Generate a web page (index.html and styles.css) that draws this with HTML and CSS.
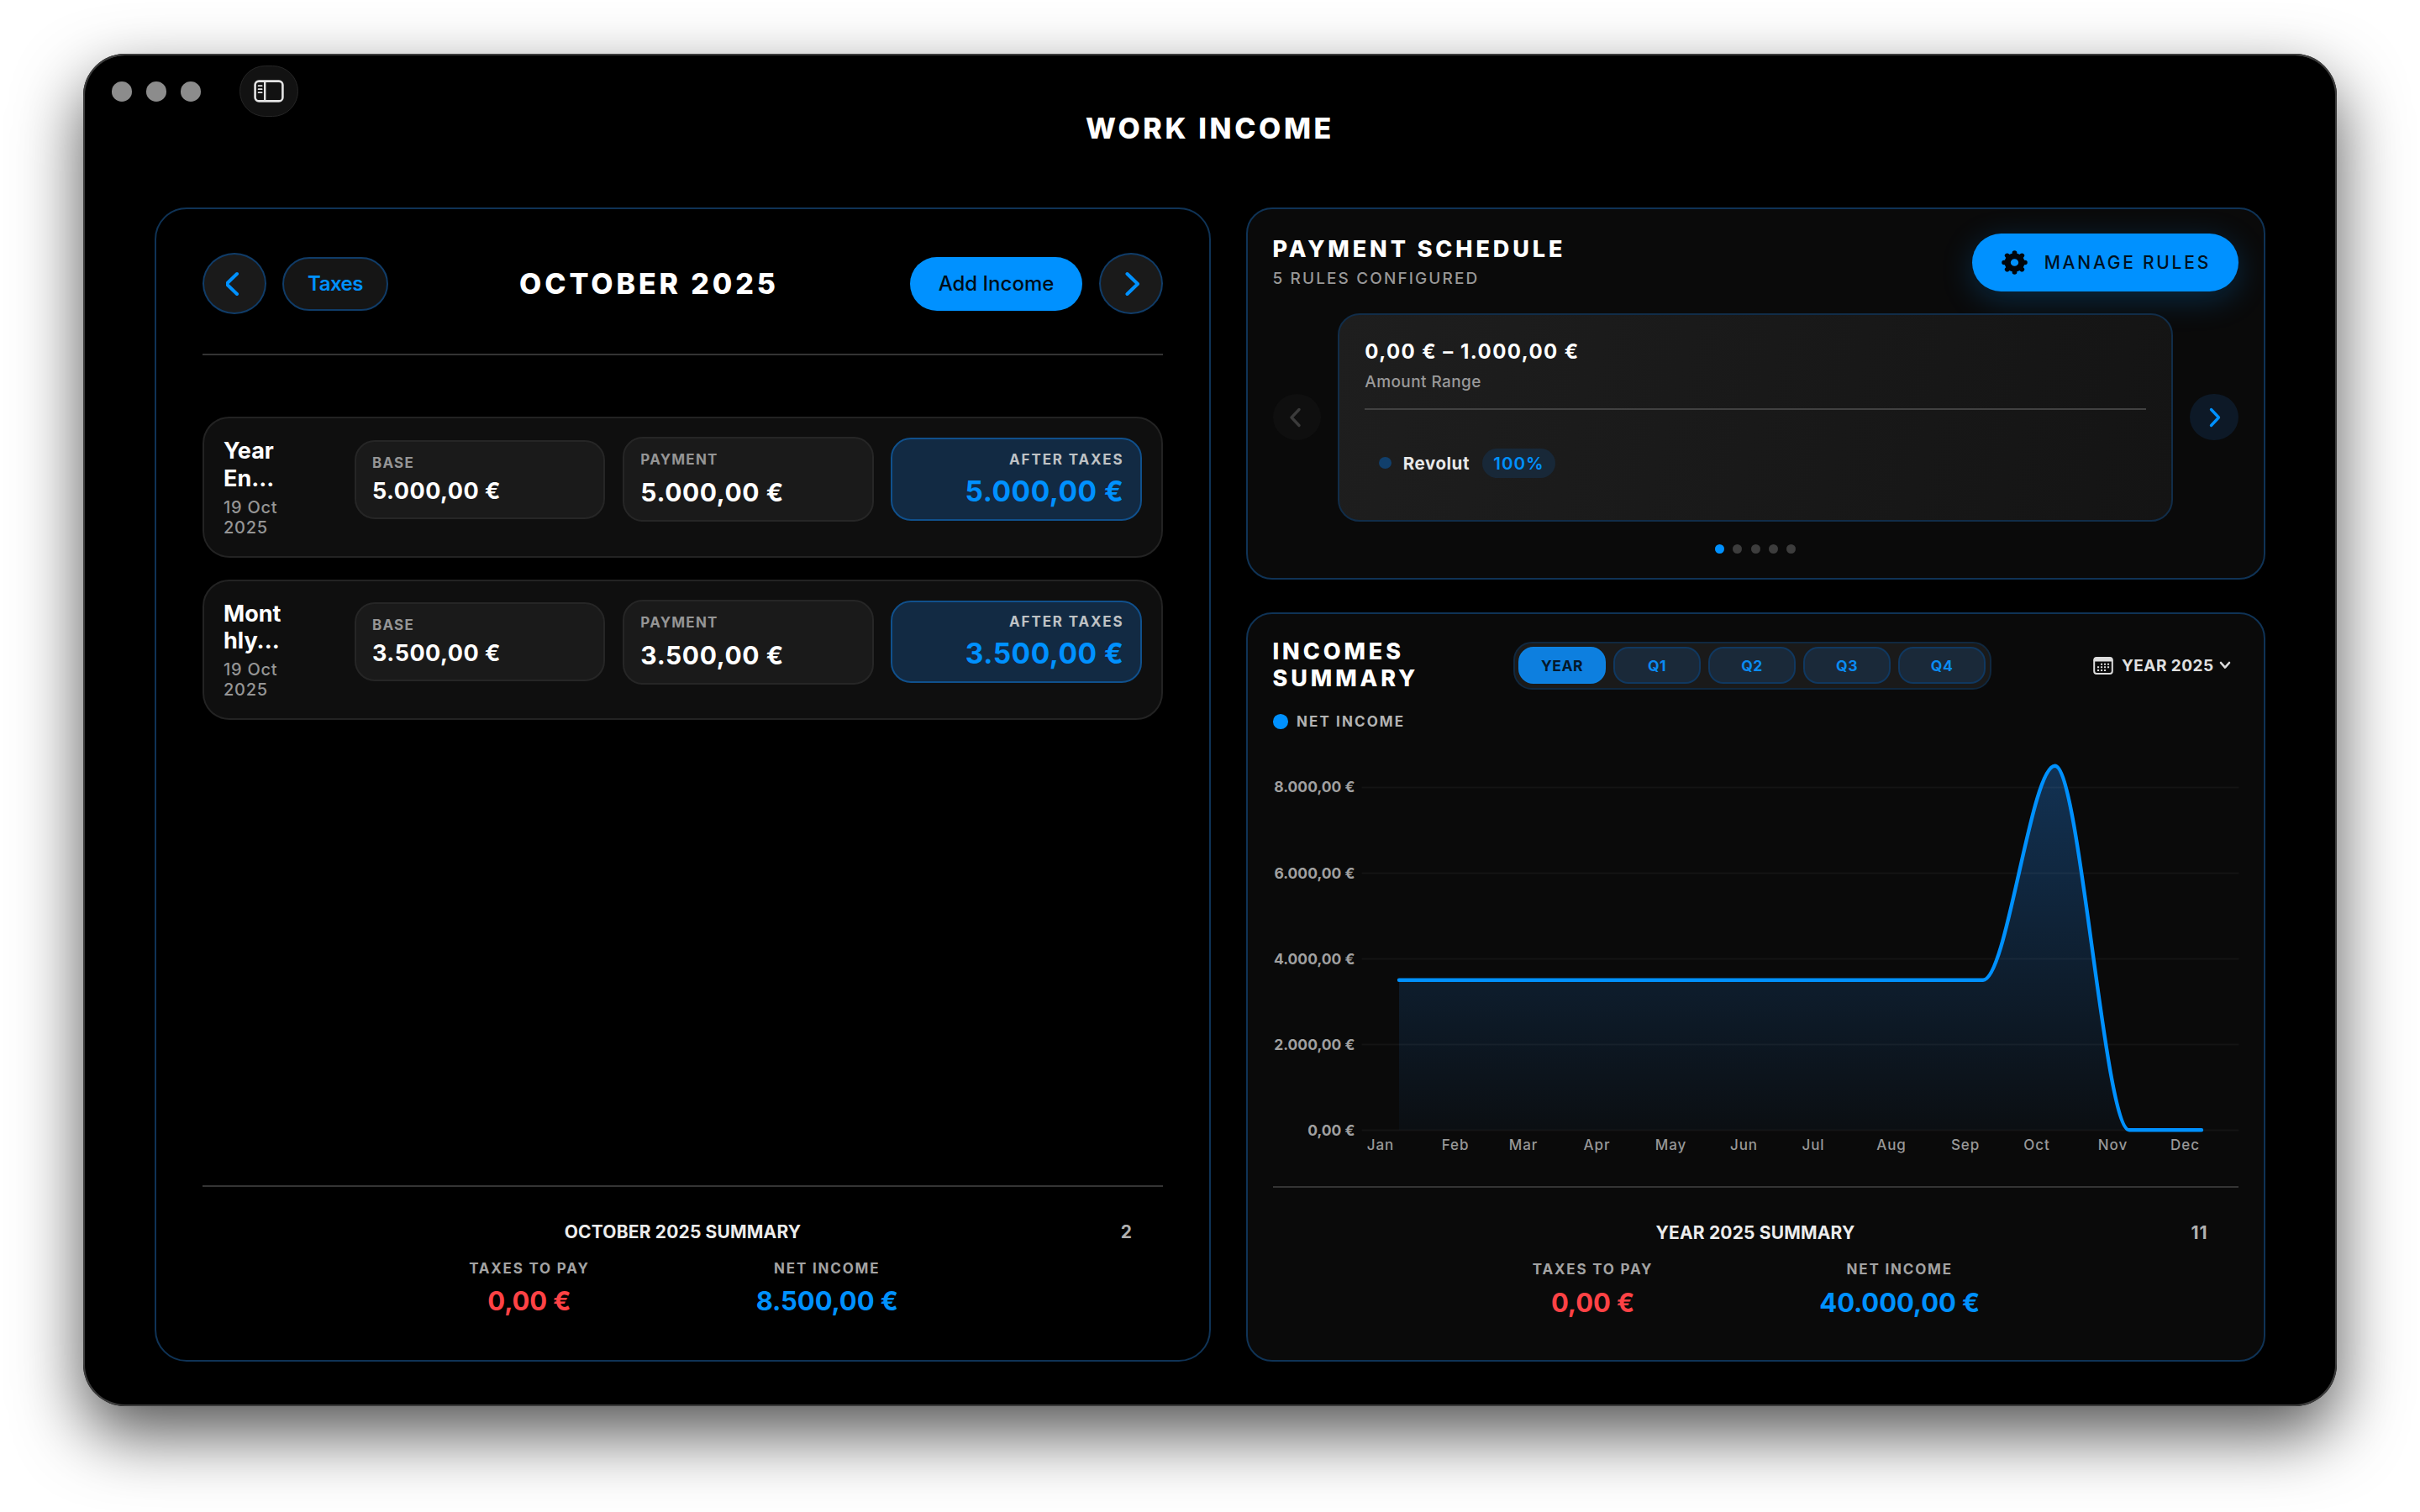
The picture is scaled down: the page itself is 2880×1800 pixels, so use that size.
FILE: index.html
```html
<!DOCTYPE html>
<html lang="en">
<head>
<meta charset="utf-8">
<title>Work Income</title>
<link rel="stylesheet" href="styles.css">
</head>
<body>
<div class="window">
  <header class="titlebar">
    <div class="toolbar">
      <span class="light"></span><span class="light"></span><span class="light"></span>
      <button class="sidebar-toggle" aria-label="Toggle sidebar">
        <svg width="36" height="27" viewBox="0 0 36 27" fill="none" stroke="#e4e4e4">
          <rect x="1.6" y="1.6" width="32.8" height="23.8" rx="4.5" stroke-width="2.6"/>
          <path d="M13.2 2v23" stroke-width="2.4"/>
          <path d="M5.6 7.2h4M5.6 11.2h4M5.6 15.2h4" stroke-width="1.8" stroke-linecap="round"/>
        </svg>
      </button>
    </div>
    <h1 class="app-title">WORK INCOME</h1>
  </header>

  <main class="columns">
    <section class="panel month">
      <div class="month-head">
        <button class="round"><svg width="20" height="30" viewBox="0 0 20 30"><path class="chev" d="M14 3 1.500 15 14 27"/></svg></button>
        <button class="pill ghost">Taxes</button>
        <h2 class="month-title">OCTOBER 2025</h2>
        <button class="pill solid">Add Income</button>
        <button class="round"><svg width="20" height="30" viewBox="0 0 20 30"><path class="chev" d="M5.500 3 18 15 5.500 27"/></svg></button>
      </div>

      <div class="list">
        <article class="row">
          <div class="who">
            <div class="name">Year<br>En...</div>
            <div class="date">19 Oct<br>2025</div>
          </div>
          <div class="fields">
            <div class="field base"><span class="label">BASE</span><span class="value">5.000,00 €</span></div>
            <div class="field payment"><span class="label">PAYMENT</span><span class="value">5.000,00 €</span></div>
            <div class="field after"><span class="label">AFTER TAXES</span><span class="value">5.000,00 €</span></div>
          </div>
        </article>
        <article class="row">
          <div class="who">
            <div class="name">Mont<br>hly...</div>
            <div class="date">19 Oct<br>2025</div>
          </div>
          <div class="fields">
            <div class="field base"><span class="label">BASE</span><span class="value">3.500,00 €</span></div>
            <div class="field payment"><span class="label">PAYMENT</span><span class="value">3.500,00 €</span></div>
            <div class="field after"><span class="label">AFTER TAXES</span><span class="value">3.500,00 €</span></div>
          </div>
        </article>
      </div>

      <footer class="summary">
        <div class="summary-head"><h3>OCTOBER 2025 SUMMARY</h3><span class="count">2</span></div>
        <div class="stats">
          <div class="stat"><span class="stat-label">TAXES TO PAY</span><span class="stat-value red">0,00 €</span></div>
          <div class="stat"><span class="stat-label">NET INCOME</span><span class="stat-value">8.500,00 €</span></div>
        </div>
      </footer>
    </section>

    <div class="side">
      <section class="panel card schedule">
        <div class="schedule-head">
          <div>
            <h2 class="card-title">PAYMENT SCHEDULE</h2>
            <p class="card-sub">5 RULES CONFIGURED</p>
          </div>
          <button class="manage">
            <svg width="31" height="29" viewBox="-15 -15 30 30" preserveAspectRatio="none" fill="none" stroke="#00060c">
              <circle r="8" stroke-width="7"/>
              <path stroke-width="5.6" stroke-linecap="round" d="M0-10V-12M0 10V12M-10 0H-12M10 0H12M7.1-7.1 8.5-8.5M-7.1-7.1-8.5-8.5M7.1 7.1 8.5 8.5M-7.1 7.1-8.5 8.5"/>
            </svg>
            <span>MANAGE RULES</span>
          </button>
        </div>
        <div class="carousel">
          <button class="arrow off"><svg width="16" height="24" viewBox="0 0 16 24"><path class="chev" d="M11 2.500 2 12 11 21.500"/></svg></button>
          <div class="rule">
            <div class="rule-range">0,00 € – 1.000,00 €</div>
            <div class="rule-sub">Amount Range</div>
            <div class="rule-item"><i class="rule-dot"></i><b>Revolut</b><span class="percent">100%</span></div>
          </div>
          <button class="arrow"><svg width="16" height="24" viewBox="0 0 16 24"><path class="chev" d="M4.500 2.500 13.500 12 4.500 21.500"/></svg></button>
        </div>
        <div class="pager"><i class="on"></i><i></i><i></i><i></i><i></i></div>
      </section>

      <section class="panel card incomes">
        <div class="incomes-head">
          <h2 class="card-title two-line">INCOMES<br>SUMMARY</h2>
          <div class="segments">
            <button class="seg active">YEAR</button><button class="seg">Q1</button><button class="seg">Q2</button><button class="seg">Q3</button><button class="seg">Q4</button>
          </div>
          <button class="year-menu">
            <svg width="24" height="21" viewBox="0 0 24 21">
              <rect x="1.200" y="1" width="21.600" height="19" rx="3" fill="none" stroke="#dcdcdc" stroke-width="2"/>
              <path d="M1.200 5V3.500Q1.200 1 3.500 1H20.500Q22.800 1 22.800 3.500V5Z" fill="#dcdcdc" stroke="#dcdcdc"/>
              <path fill="#dcdcdc" d="M9 7.700h2.100v2H9zM13 7.700h2.100v2H13zM17 7.700h2.100v2H17zM5 11.300h2.100v2H5zM9 11.300h2.100v2H9zM13 11.300h2.100v2H13zM17 11.300h2.100v2H17zM5 14.900h2.100v2H5zM9 14.900h2.100v2H9zM13 14.900h2.100v2H13z"/>
            </svg>
            <span>YEAR 2025</span>
            <svg width="14" height="10" viewBox="0 0 14 10"><path d="M2 2l5 5.600L12 2" fill="none" stroke="#dcdcdc" stroke-width="2.600" stroke-linecap="round" stroke-linejoin="round"/></svg>
          </button>
        </div>
        <div class="legend"><i></i><span>NET INCOME</span></div>
        <svg class="chart" width="1150" height="510" viewBox="0 0 1150 510">
          <defs>
            <linearGradient id="area" x1="0" y1="0" x2="0" y2="1">
              <stop offset="0" stop-color="#258fff" stop-opacity=".3"/>
              <stop offset="1" stop-color="#258fff" stop-opacity=".035"/>
            </linearGradient>
          </defs>
          <path fill="url(#area)" d="M150 463.300V284.800H845C873.500 284.800 902 29.800 930.500 29.800C960 29.800 989.500 463.300 1019 463.300Z"/>
          <path class="grid" d="M105.500 55.500H1149.500M105.500 157.500H1149.500M105.500 259.500H1149.500M105.500 361.500H1149.500M105.500 463.500H1149.500"/>
          <path class="line" d="M150 284.800H845C873.500 284.800 902 29.800 930.500 29.800C960 29.800 989.500 463.300 1019 463.300H1105"/>
          <g class="y-axis">
            <text x="97.500" y="61.300">8.000,00 €</text>
            <text x="97.500" y="163.500">6.000,00 €</text>
            <text x="97.500" y="265.500">4.000,00 €</text>
            <text x="97.500" y="367.500">2.000,00 €</text>
            <text x="97.500" y="469.500">0,00 €</text>
          </g>
          <g class="x-axis">
            <text x="128" y="487">Jan</text><text x="217" y="487">Feb</text><text x="298" y="487">Mar</text>
            <text x="385.500" y="487">Apr</text><text x="473.500" y="487">May</text><text x="560.500" y="487">Jun</text>
            <text x="643" y="487">Jul</text><text x="736" y="487">Aug</text><text x="824" y="487">Sep</text>
            <text x="909" y="487">Oct</text><text x="999.500" y="487">Nov</text><text x="1085.500" y="487">Dec</text>
          </g>
        </svg>
        <footer class="summary">
          <div class="summary-head"><h3>YEAR 2025 SUMMARY</h3><span class="count">11</span></div>
          <div class="stats">
            <div class="stat"><span class="stat-label">TAXES TO PAY</span><span class="stat-value red">0,00 €</span></div>
            <div class="stat"><span class="stat-label">NET INCOME</span><span class="stat-value">40.000,00 €</span></div>
          </div>
        </footer>
      </section>
    </div>
  </main>
</div>
</body>
</html>
```
FILE: styles.css
```css
* { box-sizing: border-box; }

body {
  margin: 0;
  width: 2880px;
  height: 1800px;
  overflow: hidden;
  background: #fff;
  font-family: Inter, "Liberation Sans", sans-serif;
  color: #fff;
  display: flow-root;
}

h1, h2, h3, p { margin: 0; }

button {
  font: inherit;
  color: inherit;
  border: 0;
  padding: 0;
  background: none;
  display: flex;
  align-items: center;
  justify-content: center;
}

svg { display: block; flex: none; }

.window {
  margin: 64px 99px;
  width: 2682px;
  height: 1610px;
  border-radius: 50px;
  background: #000;
  box-shadow:
    inset 0 0 0 2px #3c3c3c,
    inset 0 2px 0 0 #555,
    0 33px 80px rgba(0, 0, 0, .67);
}

/* Title bar */
.titlebar { height: 183px; }

.toolbar {
  display: flex;
  align-items: center;
  height: 75px;
  padding: 14px 0 0 34px;
}

.light {
  width: 24.4px;
  height: 24px;
  margin-right: 16.6px;
  border-radius: 50%;
  background: #8c8c8c;
}

.sidebar-toggle {
  width: 70px;
  height: 61px;
  margin-left: 29px;
  border-radius: 31px;
  border: 1.5px solid #262626;
  background: #121212;
}

.app-title {
  margin-top: -7px;
  text-align: center;
  font-size: 34px;
  line-height: 41px;
  font-weight: 800;
  letter-spacing: 3.6px;
}

/* Columns */
.columns {
  display: grid;
  grid-template-columns: 1257px 1213px;
  gap: 41.5px;
  height: 1374px;
  padding-left: 85px;
}

.panel {
  display: flex;
  flex-direction: column;
  border: 2px solid #0f3356;
  border-radius: 38px;
}

.month { padding: 52px 55px 50px; }

.month-head {
  display: flex;
  align-items: center;
  padding-bottom: 47px;
  border-bottom: 2px solid #343434;
}

.round {
  width: 76px;
  height: 73px;
  border-radius: 50%;
  border: 2px solid #103c68;
  background: #1a1a1a;
}

.round:first-child .chev { transform: translateX(-1px); }

.chev {
  fill: none;
  stroke: #0091ff;
  stroke-width: 4;
  stroke-linecap: round;
  stroke-linejoin: round;
}

.pill {
  height: 64px;
  border-radius: 32px;
  font-size: 24px;
  font-weight: 600;
}

.ghost {
  width: 126px;
  margin-left: 19px;
  border: 2px solid #103c68;
  background: #151515;
  color: #0091ff;
  letter-spacing: -.5px;
}

.solid {
  width: 205px;
  margin-right: 20px;
  background: #0091ff;
  color: #000d18;
  font-weight: 550;
}

.month-title {
  flex: 1;
  text-align: center;
  font-size: 34px;
  line-height: 42px;
  font-weight: 800;
  letter-spacing: 3.9px;
}

/* Income rows */
.list {
  flex: 1;
  display: flex;
  flex-direction: column;
  gap: 26px;
  padding-top: 73px;
}

.row {
  display: flex;
  align-items: flex-start;
  gap: 20px;
  height: 167.5px;
  padding: 22px 23px 0;
  border: 2px solid #232323;
  border-radius: 32px;
  background: #0f0f0f;
}

.who { width: 135.5px; padding-top: 1px; }

.name {
  font-size: 27px;
  line-height: 32.5px;
  font-weight: 650;
}

.date {
  margin-top: 5.5px;
  font-size: 20px;
  line-height: 24px;
  font-weight: 500;
  letter-spacing: .75px;
  color: #959595;
}

.fields {
  flex: 1;
  display: grid;
  grid-template-columns: repeat(3, 1fr);
  gap: 20.5px;
  align-items: center;
}

.field {
  display: flex;
  flex-direction: column;
  border: 2px solid #262626;
  border-radius: 24px;
  background: #1a1a1a;
  padding: 15px 19.5px 14px;
}

.label {
  font-size: 17px;
  line-height: 20px;
  font-weight: 650;
  letter-spacing: 1.2px;
  color: #959595;
}

.value {
  margin-top: 7px;
  font-size: 27px;
  line-height: 34px;
  font-weight: 650;
  letter-spacing: .48px;
}

.payment .value {
  margin-top: 10px;
  font-size: 30px;
  line-height: 38px;
  letter-spacing: .6px;
}

.after {
  padding-top: 13.5px;
  border-color: #10508c;
  background: #122a43;
  align-items: flex-end;
}

.after .label {
  color: #bfc2c5;
  letter-spacing: 1.85px;
}

.after .value {
  margin: 9px 0 0;
  font-size: 33.5px;
  line-height: 38px;
  font-weight: 700;
  letter-spacing: .5px;
  color: #0091ff;
}

/* Summary footer shared by both tall panels */
.summary {
  border-top: 2px solid #343434;
  padding-top: 40px;
}

.summary-head {
  display: grid;
  grid-template-columns: 1fr auto 1fr;
}

.summary-head h3 {
  grid-column: 2;
  font-size: 21px;
  line-height: 28px;
  font-weight: 650;
  letter-spacing: .17px;
  color: #ececec;
}

.count {
  justify-self: end;
  padding-right: 36px;
  font-size: 21px;
  line-height: 28px;
  font-weight: 650;
  color: #b0b0b0;
  letter-spacing: 1px;
}

.stats {
  display: flex;
  justify-content: center;
  gap: 198px;
  padding: 17px 0 0 2px;
}

.stat {
  display: flex;
  flex-direction: column;
  align-items: center;
}

.stat-label {
  font-size: 17px;
  line-height: 24px;
  font-weight: 650;
  letter-spacing: 1.8px;
  color: #a3a3a3;
}

.stat-value {
  margin-top: 7.5px;
  font-size: 31px;
  line-height: 40px;
  font-weight: 650;
  letter-spacing: -.1px;
  color: #0091ff;
}

.red { color: #ff4245; }

/* Right column */
.side {
  display: flex;
  flex-direction: column;
  gap: 39.5px;
}

.card {
  background: #0a0a0a;
  border-radius: 31px;
  padding-inline: 30px;
}

.schedule { height: 442.5px; padding-top: 28.5px; }

.schedule-head {
  display: flex;
  justify-content: space-between;
  height: 69px;
}

.card-title {
  margin-top: 2px;
  font-size: 27px;
  line-height: 34px;
  font-weight: 800;
  letter-spacing: 3.9px;
}

.card-sub {
  margin-top: 6.5px;
  font-size: 19px;
  line-height: 24px;
  font-weight: 550;
  letter-spacing: 2.12px;
  color: #989898;
}

.manage {
  width: 317px;
  height: 69px;
  gap: 20px;
  border-radius: 35px;
  background: #0091ff;
  color: #00111f;
  font-size: 21px;
  font-weight: 550;
  letter-spacing: 2.75px;
  box-shadow: 0 9px 38px rgba(0, 145, 255, .24);
}

.manage span { margin-right: -2.7px; }

.carousel {
  display: flex;
  align-items: center;
  justify-content: space-between;
  padding-top: 26.5px;
}

.arrow {
  width: 57.5px;
  height: 55px;
  border-radius: 50%;
  background: #0d1927;
}

.arrow .chev { stroke-width: 3.3; }
.arrow.off { background: #0f0f0f; }
.arrow.off .chev { stroke: #3b3b3b; }

.rule {
  width: 993.5px;
  height: 247.5px;
  padding: 29px 30px 0;
  border: 2px solid #112d49;
  border-radius: 26px;
  background: linear-gradient(105deg, #1e1e1e, #191919 50%, #141414);
}

.rule-range {
  font-size: 24px;
  line-height: 30px;
  font-weight: 750;
  letter-spacing: 1.45px;
}

.rule-sub {
  padding: 9px 0 19px;
  border-bottom: 2px solid #414141;
  font-size: 19px;
  line-height: 24px;
  font-weight: 550;
  letter-spacing: .42px;
  color: #9a9a9a;
}

.rule-item {
  display: flex;
  align-items: center;
  padding: 45.5px 0 0 17px;
  font-size: 20.5px;
}

.rule-item b {
  font-weight: 650;
  letter-spacing: .55px;
  color: #e8e8e8;
}

.rule-dot {
  width: 15px;
  height: 14px;
  margin-right: 13.5px;
  border-radius: 50%;
  background: #113f6b;
}

.percent {
  width: 87px;
  height: 35.5px;
  margin-left: 15px;
  border-radius: 18px;
  background: #182838;
  color: #0091ff;
  font-weight: 600;
  line-height: 35.5px;
  text-align: center;
  letter-spacing: 1px;
}

.pager {
  display: flex;
  justify-content: center;
  gap: 10.3px;
  padding-top: 27px;
}

.pager i {
  width: 11px;
  height: 11px;
  border-radius: 50%;
  background: #3d3d3d;
}

.pager .on { background: #0091ff; }

/* Incomes panel */
.incomes {
  flex: 1;
  padding-top: 29px;
  padding-bottom: 48.5px;
}

.incomes-head {
  display: grid;
  grid-template-columns: 286px 569px 1fr;
  align-items: center;
}

.two-line { margin: 0; line-height: 32px; }

.segments {
  display: flex;
  justify-content: center;
  gap: 9.5px;
  height: 57px;
  align-items: center;
  border: 2px solid #10283f;
  border-radius: 22px;
  background: #1a1a1a;
}

.seg {
  width: 103.5px;
  height: 44px;
  border: 2px solid #103860;
  border-radius: 18px;
  background: #1a2939;
  color: #0a8bf2;
  font-size: 17.5px;
  font-weight: 650;
  letter-spacing: .5px;
}

.seg.active {
  border-color: #0d82e2;
  background: #0d7fdf;
  color: #05182a;
}

.year-menu {
  justify-self: end;
  margin-right: 9px;
  font-size: 19px;
  font-weight: 650;
  letter-spacing: .45px;
  color: #e0e0e0;
}

.year-menu span { margin: 0 6px 0 10px; }

.legend {
  display: flex;
  align-items: center;
  gap: 10px;
  margin-top: 23px;
  height: 24px;
  font-size: 17px;
  font-weight: 650;
  letter-spacing: 2.1px;
  color: #b3b3b3;
}

.legend i {
  width: 18.5px;
  height: 18px;
  border-radius: 50%;
  background: #0091ff;
}

.chart { margin-top: 11px; }

.grid { stroke: rgba(255, 255, 255, .045); stroke-width: 2; }

.line {
  fill: none;
  stroke: #0091ff;
  stroke-width: 4.4;
  stroke-linecap: round;
  stroke-linejoin: round;
}

.y-axis text {
  font-size: 17.5px;
  font-weight: 650;
  text-anchor: end;
  fill: #a0a0a0;
}

.x-axis text {
  font-size: 17px;
  font-weight: 500;
  letter-spacing: .9px;
  text-anchor: middle;
  fill: #989898;
}

.incomes .summary { margin-top: auto; }
```
